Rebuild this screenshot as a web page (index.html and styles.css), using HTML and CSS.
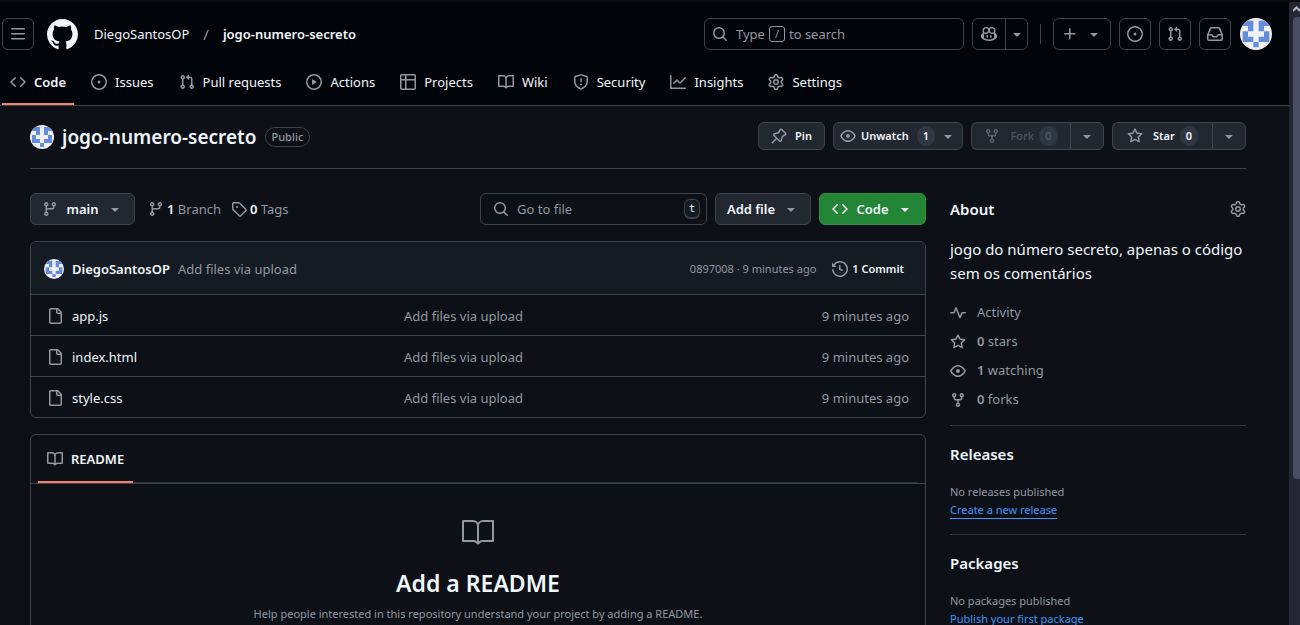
FILE: index.html
```html
<!DOCTYPE html>
<html lang="en">
<head>
<meta charset="utf-8">
<title>DiegoSantosOP/jogo-numero-secreto</title>
<link rel="stylesheet" href="styles.css">
</head>
<body>
<svg class="sprite" aria-hidden="true">
<symbol id="menu" viewBox="0 0 16 16"><path d="M1 2.75A.75.75 0 0 1 1.75 2h12.5a.75.75 0 0 1 0 1.5H1.75A.75.75 0 0 1 1 2.75Zm0 5A.75.75 0 0 1 1.75 7h12.5a.75.75 0 0 1 0 1.5H1.75A.75.75 0 0 1 1 7.75ZM1.75 12h12.5a.75.75 0 0 1 0 1.5H1.75a.75.75 0 0 1 0-1.5Z"/></symbol>
<symbol id="github" viewBox="0 0 16 16"><path d="M8 0c4.42 0 8 3.58 8 8a8.013 8.013 0 0 1-5.45 7.59c-.4.08-.55-.17-.55-.38 0-.27.01-1.13.01-2.2 0-.75-.25-1.23-.54-1.48 1.78-.2 3.65-.88 3.65-3.95 0-.88-.31-1.59-.82-2.15.08-.2.36-1.02-.08-2.12 0 0-.67-.22-2.2.82-.64-.18-1.32-.27-2-.27-.68 0-1.36.09-2 .27-1.53-1.03-2.2-.82-2.2-.82-.44 1.1-.16 1.92-.08 2.12-.51.56-.82 1.28-.82 2.15 0 3.06 1.86 3.75 3.64 3.95-.23.2-.44.55-.51 1.07-.46.21-1.61.55-2.33-.66-.15-.24-.6-.83-1.23-.82-.67.01-.27.38.01.53.34.19.73.9.82 1.13.16.45.68 1.31 2.69.94 0 .67.01 1.3.01 1.49 0 .21-.15.45-.55.38A7.995 7.995 0 0 1 0 8c0-4.42 3.58-8 8-8Z"/></symbol>
<symbol id="code" viewBox="0 0 16 16"><path d="m11.28 3.22 4.25 4.25a.75.75 0 0 1 0 1.06l-4.25 4.25a.749.749 0 0 1-1.275-.326.749.749 0 0 1 .215-.734L13.94 8l-3.72-3.72a.749.749 0 0 1 .326-1.275.749.749 0 0 1 .734.215Zm-6.56 0a.751.751 0 0 1 1.042.018.751.751 0 0 1 .018 1.042L2.06 8l3.72 3.72a.749.749 0 0 1-.326 1.275.749.749 0 0 1-.734-.215L.47 8.53a.75.75 0 0 1 0-1.06Z"/></symbol>
<symbol id="issue" viewBox="0 0 16 16"><path d="M8 9.5a1.5 1.5 0 1 0 0-3 1.5 1.5 0 0 0 0 3Z"/><path d="M8 0a8 8 0 1 1 0 16A8 8 0 0 1 8 0ZM1.5 8a6.5 6.5 0 1 0 13 0 6.5 6.5 0 0 0-13 0Z"/></symbol>
<symbol id="pull" viewBox="0 0 16 16"><path d="M1.5 3.25a2.25 2.25 0 1 1 3 2.122v5.256a2.251 2.251 0 1 1-1.5 0V5.372A2.25 2.25 0 0 1 1.5 3.25Zm5.677-.177L9.573.677A.25.25 0 0 1 10 .854V2.5h1A2.5 2.5 0 0 1 13.5 5v5.628a2.251 2.251 0 1 1-1.5 0V5a1 1 0 0 0-1-1h-1v1.646a.25.25 0 0 1-.427.177L7.177 3.427a.25.25 0 0 1 0-.354ZM3.75 2.5a.75.75 0 1 0 0 1.5.75.75 0 0 0 0-1.5Zm0 9.5a.75.75 0 1 0 0 1.5.75.75 0 0 0 0-1.5Zm8.25.75a.75.75 0 1 0 1.5 0 .75.75 0 0 0-1.5 0Z"/></symbol>
<symbol id="play" viewBox="0 0 16 16"><path d="M8 0a8 8 0 1 1 0 16A8 8 0 0 1 8 0ZM1.5 8a6.5 6.5 0 1 0 13 0 6.5 6.5 0 0 0-13 0Zm4.879-2.773 4.264 2.559a.25.25 0 0 1 0 .428l-4.264 2.559A.25.25 0 0 1 6 10.559V5.442a.25.25 0 0 1 .379-.215Z"/></symbol>
<symbol id="table" viewBox="0 0 16 16"><path d="M0 1.75C0 .784.784 0 1.75 0h12.5C15.216 0 16 .784 16 1.75v12.5A1.75 1.75 0 0 1 14.25 16H1.75A1.75 1.75 0 0 1 0 14.25ZM6.5 6.5v8h7.75a.25.25 0 0 0 .25-.25V6.5Zm8-1.5V1.75a.25.25 0 0 0-.25-.25H6.5V5Zm-13 1.5v7.75c0 .138.112.25.25.25H5v-8ZM5 5V1.5H1.75a.25.25 0 0 0-.25.25V5Z"/></symbol>
<symbol id="book" viewBox="0 0 16 16"><path d="M0 1.75A.75.75 0 0 1 .75 1h4.253c1.227 0 2.317.59 3 1.501A3.743 3.743 0 0 1 11.006 1h4.245a.75.75 0 0 1 .75.75v10.5a.75.75 0 0 1-.75.75h-4.507a2.25 2.25 0 0 0-1.591.659l-.622.621a.75.75 0 0 1-1.06 0l-.622-.621A2.25 2.25 0 0 0 5.258 13H.75a.75.75 0 0 1-.75-.75Zm7.251 10.324.004-5.073-.002-2.253A2.25 2.25 0 0 0 5.003 2.5H1.5v9h3.757a3.75 3.75 0 0 1 1.994.574ZM8.755 4.75l-.004 7.322a3.752 3.752 0 0 1 1.992-.572H14.5v-9h-3.495a2.25 2.25 0 0 0-2.25 2.25Z"/></symbol>
<symbol id="book-large" viewBox="0 0 24 24"><path d="M0 3.75A.75.75 0 0 1 .75 3h7.497c1.566 0 2.945.8 3.751 2.014A4.495 4.495 0 0 1 15.75 3h7.5a.75.75 0 0 1 .75.75v15.063a.752.752 0 0 1-.755.75l-7.682-.052a3 3 0 0 0-2.142.878l-.89.891a.75.75 0 0 1-1.061 0l-.902-.901a2.996 2.996 0 0 0-2.121-.879H.75a.75.75 0 0 1-.75-.75Zm12.75 15.232a4.503 4.503 0 0 1 2.823-.971l6.927.047V4.5h-6.75a3 3 0 0 0-3 3ZM11.247 7.497a3 3 0 0 0-3-2.997H1.5V18h6.947c1.018 0 2.006.346 2.803.98Z"/></symbol>
<symbol id="shield" viewBox="0 0 16 16"><path d="M7.467.133a1.748 1.748 0 0 1 1.066 0l5.25 1.68A1.75 1.75 0 0 1 15 3.48V7c0 1.566-.32 3.182-1.303 4.682-.983 1.498-2.585 2.813-5.032 3.855a1.697 1.697 0 0 1-1.33 0c-2.447-1.042-4.049-2.357-5.032-3.855C1.32 10.182 1 8.566 1 7V3.48a1.75 1.75 0 0 1 1.217-1.667Zm.61 1.429a.25.25 0 0 0-.153 0l-5.25 1.68a.25.25 0 0 0-.174.238V7c0 1.358.275 2.666 1.057 3.86.784 1.194 2.121 2.34 4.366 3.297a.196.196 0 0 0 .154 0c2.245-.956 3.582-2.104 4.366-3.298C13.225 9.666 13.5 8.36 13.5 7V3.48a.251.251 0 0 0-.174-.237l-5.25-1.68ZM8.75 4.75v3a.75.75 0 0 1-1.5 0v-3a.75.75 0 0 1 1.5 0ZM9 10.5a1 1 0 1 1-2 0 1 1 0 0 1 2 0Z"/></symbol>
<symbol id="graph" viewBox="0 0 16 16"><path d="M1.5 1.75V13.5h13.75a.75.75 0 0 1 0 1.5H.75a.75.75 0 0 1-.75-.75V1.75a.75.75 0 0 1 1.5 0Zm14.28 2.53-5.25 5.25a.75.75 0 0 1-1.06 0L7 7.06 4.28 9.78a.751.751 0 0 1-1.042-.018.751.751 0 0 1-.018-1.042l3.25-3.25a.75.75 0 0 1 1.06 0L10 7.94l4.72-4.72a.751.751 0 0 1 1.042.018.751.751 0 0 1 .018 1.042Z"/></symbol>
<symbol id="gear" viewBox="0 0 16 16"><path d="M8 0a8.2 8.2 0 0 1 .701.031C9.444.095 9.99.645 10.16 1.29l.288 1.107c.018.066.079.158.212.224.231.114.454.243.668.386.123.082.233.09.299.071l1.103-.303c.644-.176 1.392.021 1.82.63.27.385.506.792.704 1.218.315.675.111 1.422-.364 1.891l-.814.806c-.049.048-.098.147-.088.294.016.257.016.515 0 .772-.01.147.038.246.088.294l.814.806c.475.469.679 1.216.364 1.891a7.977 7.977 0 0 1-.704 1.217c-.428.61-1.176.807-1.82.63l-1.102-.302c-.067-.019-.177-.011-.3.071a5.909 5.909 0 0 1-.668.386c-.133.066-.194.158-.211.224l-.29 1.106c-.168.646-.715 1.196-1.458 1.26a8.006 8.006 0 0 1-1.402 0c-.743-.064-1.289-.614-1.458-1.26l-.289-1.106c-.018-.066-.079-.158-.212-.224a5.738 5.738 0 0 1-.668-.386c-.123-.082-.233-.09-.299-.071l-1.103.303c-.644.176-1.392-.021-1.82-.63a8.12 8.12 0 0 1-.704-1.218c-.315-.675-.111-1.422.363-1.891l.815-.806c.05-.048.098-.147.088-.294a6.214 6.214 0 0 1 0-.772c.01-.147-.038-.246-.088-.294l-.815-.806C.635 6.045.431 5.298.746 4.623a7.92 7.92 0 0 1 .704-1.217c.428-.61 1.176-.807 1.82-.63l1.102.302c.067.019.177.011.3-.071.214-.143.437-.272.668-.386.133-.066.194-.158.211-.224l.29-1.106C6.009.645 6.556.095 7.299.03 7.53.01 7.764 0 8 0Zm-.571 1.525c-.036.003-.108.036-.137.146l-.289 1.105c-.147.561-.549.967-.998 1.189-.173.086-.34.183-.5.29-.417.278-.97.423-1.529.27l-1.103-.303c-.109-.03-.175.016-.195.045-.22.312-.412.644-.573.99-.014.031-.021.11.059.19l.815.806c.411.406.562.957.53 1.456a4.709 4.709 0 0 0 0 .582c.032.499-.119 1.05-.53 1.456l-.815.806c-.081.08-.073.159-.059.19.162.346.353.677.573.989.02.03.085.076.195.046l1.102-.303c.56-.153 1.113-.008 1.53.27.161.107.328.204.501.29.447.222.85.629.997 1.189l.289 1.105c.029.109.101.143.137.146a6.6 6.6 0 0 0 1.142 0c.036-.003.108-.036.137-.146l.289-1.105c.147-.561.549-.967.998-1.189.173-.086.34-.183.5-.29.417-.278.97-.423 1.529-.27l1.103.303c.109.029.175-.016.195-.045.22-.313.411-.644.573-.99.014-.031.021-.11-.059-.19l-.815-.806c-.411-.406-.562-.957-.53-1.456a4.709 4.709 0 0 0 0-.582c-.032-.499.119-1.05.53-1.456l.815-.806c.081-.08.073-.159.059-.19a6.464 6.464 0 0 0-.573-.989c-.02-.03-.085-.076-.195-.046l-1.102.303c-.56.153-1.113.008-1.53-.27a4.44 4.44 0 0 0-.501-.29c-.447-.222-.85-.629-.997-1.189l-.289-1.105c-.029-.11-.101-.143-.137-.146a6.6 6.6 0 0 0-1.142 0ZM11 8a3 3 0 1 1-6 0 3 3 0 0 1 6 0ZM9.5 8a1.5 1.5 0 1 0-3.001.001A1.5 1.5 0 0 0 9.5 8Z"/></symbol>
<symbol id="search" viewBox="0 0 16 16"><path d="M10.68 11.74a6 6 0 0 1-7.922-8.982 6 6 0 0 1 8.982 7.922l3.04 3.04a.749.749 0 0 1-.326 1.275.749.749 0 0 1-.734-.215ZM11.5 7a4.499 4.499 0 1 0-8.997 0A4.499 4.499 0 0 0 11.5 7Z"/></symbol>
<symbol id="copilot" viewBox="0 0 16 16"><path d="M7.998 15.035c-4.562 0-7.873-2.914-7.998-3.749V9.338c.085-.628.677-1.686 1.588-2.065.013-.07.024-.143.036-.218.029-.183.06-.384.126-.612-.201-.508-.254-1.084-.254-1.656 0-.87.128-1.769.693-2.484.579-.733 1.494-1.124 2.724-1.261 1.206-.134 2.262.034 2.944.765.05.053.096.108.139.165.044-.057.094-.112.143-.165.682-.731 1.738-.899 2.944-.765 1.23.137 2.145.528 2.724 1.261.566.715.693 1.614.693 2.484 0 .572-.053 1.148-.254 1.656.066.228.098.429.126.612.012.076.024.148.037.218.924.385 1.522 1.471 1.591 2.095v1.872c0 .766-3.351 3.795-8.002 3.795Zm0-1.485c2.28 0 4.584-1.11 5.002-1.433V7.862l-.023-.116c-.49.21-1.075.291-1.727.291-1.146 0-2.059-.327-2.71-.991A3.222 3.222 0 0 1 8 6.303a3.24 3.24 0 0 1-.544.743c-.65.664-1.563.991-2.71.991-.652 0-1.236-.081-1.727-.291l-.023.116v4.255c.419.323 2.722 1.433 5.002 1.433ZM6.762 2.83c-.193-.206-.637-.413-1.682-.297-1.019.113-1.479.404-1.713.7-.247.312-.369.789-.369 1.554 0 .793.129 1.171.308 1.371.162.181.519.379 1.442.379.853 0 1.339-.235 1.638-.54.315-.322.527-.827.617-1.553.117-.935-.037-1.395-.241-1.614Zm4.155-.297c-1.044-.116-1.488.091-1.681.297-.204.219-.359.679-.242 1.614.091.726.303 1.231.618 1.553.299.305.784.54 1.638.54.922 0 1.28-.198 1.442-.379.179-.2.308-.578.308-1.371 0-.765-.123-1.242-.37-1.554-.233-.296-.693-.587-1.713-.7Z"/><path d="M6.25 9.037a.75.75 0 0 1 .75.75v1.501a.75.75 0 0 1-1.5 0V9.787a.75.75 0 0 1 .75-.75Zm4.25.75v1.501a.75.75 0 0 1-1.5 0V9.787a.75.75 0 0 1 1.5 0Z"/></symbol>
<symbol id="down" viewBox="0 0 16 16"><path d="m4.427 7.427 3.396 3.396a.25.25 0 0 0 .354 0l3.396-3.396A.25.25 0 0 0 11.396 7H4.604a.25.25 0 0 0-.177.427Z"/></symbol>
<symbol id="plus" viewBox="0 0 16 16"><path d="M7.75 2a.75.75 0 0 1 .75.75V7h4.25a.75.75 0 0 1 0 1.5H8.5v4.25a.75.75 0 0 1-1.5 0V8.5H2.75a.75.75 0 0 1 0-1.5H7V2.75A.75.75 0 0 1 7.75 2Z"/></symbol>
<symbol id="inbox" viewBox="0 0 16 16"><path d="M2.8 2.06A1.75 1.75 0 0 1 4.41 1h7.18c.7 0 1.333.417 1.61 1.06l2.74 6.395c.04.093.06.194.06.295v4.5A1.75 1.75 0 0 1 14.25 15H1.75A1.75 1.75 0 0 1 0 13.25v-4.5c0-.101.02-.202.06-.295Zm1.61.44a.25.25 0 0 0-.23.152L1.887 8H4.75a.75.75 0 0 1 .6.3L6.625 10h2.75l1.275-1.7a.75.75 0 0 1 .6-.3h2.863L11.82 2.652a.25.25 0 0 0-.23-.152Zm10.09 7h-2.875l-1.275 1.7a.75.75 0 0 1-.6.3h-3.5a.75.75 0 0 1-.6-.3L4.375 9.5H1.5v3.75c0 .138.112.25.25.25h12.5a.25.25 0 0 0 .25-.25Z"/></symbol>
<symbol id="pin" viewBox="0 0 16 16"><path d="m11.294.984 3.722 3.722a1.75 1.75 0 0 1-.504 2.826l-1.327.613a3.089 3.089 0 0 0-1.707 2.084l-.584 2.454c-.317 1.332-1.972 1.8-2.94.832L5.75 11.311 1.78 15.28a.749.749 0 1 1-1.06-1.06l3.969-3.97-2.204-2.204c-.968-.968-.5-2.623.832-2.94l2.454-.584a3.08 3.08 0 0 0 2.084-1.707l.613-1.327a1.75 1.75 0 0 1 2.826-.504ZM6.283 9.723l2.732 2.731a.25.25 0 0 0 .42-.119l.584-2.454a4.586 4.586 0 0 1 2.537-3.098l1.328-.613a.25.25 0 0 0 .072-.404l-3.722-3.722a.25.25 0 0 0-.404.072l-.613 1.328a4.584 4.584 0 0 1-3.098 2.537l-2.454.584a.25.25 0 0 0-.119.42l2.731 2.732Z"/></symbol>
<symbol id="eye" viewBox="0 0 16 16"><path d="M8 2c1.981 0 3.671.992 4.933 2.078 1.27 1.091 2.187 2.345 2.637 3.023a1.62 1.62 0 0 1 0 1.798c-.45.678-1.367 1.932-2.637 3.023C11.67 13.008 9.981 14 8 14c-1.981 0-3.671-.992-4.933-2.078C1.797 10.83.88 9.576.43 8.898a1.62 1.62 0 0 1 0-1.798c.45-.677 1.367-1.931 2.637-3.022C4.33 2.992 6.019 2 8 2ZM1.679 7.932a.12.12 0 0 0 0 .136c.411.622 1.241 1.75 2.366 2.717C5.176 11.758 6.527 12.5 8 12.5c1.473 0 2.825-.742 3.955-1.715 1.124-.967 1.954-2.096 2.366-2.717a.12.12 0 0 0 0-.136c-.412-.621-1.242-1.75-2.366-2.717C10.824 4.242 9.473 3.5 8 3.5c-1.473 0-2.825.742-3.955 1.715-1.124.967-1.954 2.096-2.366 2.717ZM8 10a2 2 0 1 1-.001-3.999A2 2 0 0 1 8 10Z"/></symbol>
<symbol id="fork" viewBox="0 0 16 16"><path d="M5 5.372v.878c0 .414.336.75.75.75h4.5a.75.75 0 0 0 .75-.75v-.878a2.25 2.25 0 1 1 1.5 0v.878a2.25 2.25 0 0 1-2.25 2.25h-1.5v2.128a2.251 2.251 0 1 1-1.5 0V8.5h-1.5A2.25 2.25 0 0 1 3.5 6.25v-.878a2.25 2.25 0 1 1 1.5 0ZM5 3.25a.75.75 0 1 0-1.5 0 .75.75 0 0 0 1.5 0Zm6.75.75a.75.75 0 1 0 0-1.5.75.75 0 0 0 0 1.5Zm-3 8.75a.75.75 0 1 0-1.5 0 .75.75 0 0 0 1.5 0Z"/></symbol>
<symbol id="star" viewBox="0 0 16 16"><path d="M8 .25a.75.75 0 0 1 .673.418l1.882 3.815 4.21.612a.75.75 0 0 1 .416 1.279l-3.046 2.97.719 4.192a.751.751 0 0 1-1.088.791L8 12.347l-3.766 1.98a.75.75 0 0 1-1.088-.79l.72-4.194L.818 6.374a.75.75 0 0 1 .416-1.28l4.21-.611L7.327.668A.75.75 0 0 1 8 .25Zm0 2.445L6.615 5.5a.75.75 0 0 1-.564.41l-3.097.45 2.24 2.184a.75.75 0 0 1 .216.664l-.528 3.084 2.769-1.456a.75.75 0 0 1 .698 0l2.77 1.456-.53-3.084a.75.75 0 0 1 .216-.664l2.24-2.183-3.096-.45a.75.75 0 0 1-.564-.41L8 2.694Z"/></symbol>
<symbol id="branch" viewBox="0 0 16 16"><path d="M9.5 3.25a2.25 2.25 0 1 1 3 2.122V6A2.5 2.5 0 0 1 10 8.5H6a1 1 0 0 0-1 1v1.128a2.251 2.251 0 1 1-1.5 0V5.372a2.25 2.25 0 1 1 1.5 0v1.836A2.493 2.493 0 0 1 6 7h4a1 1 0 0 0 1-1v-.628A2.25 2.25 0 0 1 9.5 3.25Zm-6 0a.75.75 0 1 0 1.5 0 .75.75 0 0 0-1.5 0Zm8.25-.75a.75.75 0 1 0 0 1.5.75.75 0 0 0 0-1.5ZM4.25 12a.75.75 0 1 0 0 1.5.75.75 0 0 0 0-1.5Z"/></symbol>
<symbol id="tag" viewBox="0 0 16 16"><path d="M1 7.775V2.75C1 1.784 1.784 1 2.75 1h5.025c.464 0 .91.184 1.238.513l6.25 6.25a1.75 1.75 0 0 1 0 2.474l-5.026 5.026a1.75 1.75 0 0 1-2.474 0l-6.25-6.25A1.752 1.752 0 0 1 1 7.775Zm1.5 0c0 .066.026.13.073.177l6.25 6.25a.25.25 0 0 0 .354 0l5.025-5.025a.25.25 0 0 0 0-.354l-6.25-6.25a.25.25 0 0 0-.177-.073H2.75a.25.25 0 0 0-.25.25ZM6 5a1 1 0 1 1 0 2 1 1 0 0 1 0-2Z"/></symbol>
<symbol id="history" viewBox="0 0 16 16"><path d="m.427 1.927 1.215 1.215a8.002 8.002 0 1 1-1.6 5.685.75.75 0 1 1 1.493-.154 6.5 6.5 0 1 0 1.18-4.458l1.358 1.358A.25.25 0 0 1 3.896 6H.25A.25.25 0 0 1 0 5.75V2.104a.25.25 0 0 1 .427-.177ZM7.75 4a.75.75 0 0 1 .75.75v2.992l2.028.812a.75.75 0 0 1-.557 1.392l-2.5-1A.751.751 0 0 1 7 8.25v-3.5A.75.75 0 0 1 7.75 4Z"/></symbol>
<symbol id="file" viewBox="0 0 16 16"><path d="M2 1.75C2 .784 2.784 0 3.75 0h6.586c.464 0 .909.184 1.237.513l2.914 2.914c.329.328.513.773.513 1.237v9.586A1.75 1.75 0 0 1 13.25 16h-9.5A1.75 1.75 0 0 1 2 14.25Zm1.75-.25a.25.25 0 0 0-.25.25v12.5c0 .138.112.25.25.25h9.5a.25.25 0 0 0 .25-.25V6h-2.75A1.75 1.75 0 0 1 9 4.25V1.5Zm6.75.062V4.25c0 .138.112.25.25.25h2.688l-.011-.013-2.914-2.914-.013-.011Z"/></symbol>
<symbol id="pulse" viewBox="0 0 16 16"><path d="M6 2c.306 0 .582.187.696.471L10 10.731l1.304-3.26A.751.751 0 0 1 12 7h3.25a.75.75 0 0 1 0 1.5h-2.742l-1.812 4.528a.751.751 0 0 1-1.392 0L6 4.77 4.696 8.03A.75.75 0 0 1 4 8.5H.75a.75.75 0 0 1 0-1.5h2.742l1.812-4.529A.751.751 0 0 1 6 2Z"/></symbol>
<symbol id="identicon" viewBox="0 0 12 12"><path fill="#f0f0f0" d="M0 0h12v12H0z"/><path fill="#638ddb" d="M1 1h4v4H3V3H1zM11 1H7v4h2V3h2zM1 5h2v2h2v2H1zM11 5H9v2H7v2h4zM5 9h2v2H5z"/></symbol>
</svg>

<div class="window">
  <div class="page">
    <header class="site-header">
      <div class="global-bar">
        <button class="square-btn" aria-label="Open menu"><svg class="icon"><use href="#menu"/></svg></button>
        <a class="logo" href="#" aria-label="Homepage"><svg class="icon icon-logo"><use href="#github"/></svg></a>
        <nav class="crumbs" aria-label="Breadcrumb">
          <a href="#">DiegoSantosOP</a><span class="slash">/</span><a class="strong" href="#">jogo-numero-secreto</a>
        </nav>
        <button class="site-search"><svg class="icon"><use href="#search"/></svg><span class="search-text">Type <kbd class="slash-key">/</kbd> to search</span></button>
        <div class="split copilot">
          <button aria-label="Copilot"><svg class="icon"><use href="#copilot"/></svg></button>
          <button class="caret-btn" aria-label="Copilot options"><svg class="icon"><use href="#down"/></svg></button>
        </div>
        <span class="bar-divider"></span>
        <button class="square-btn create-btn" aria-label="Create new"><svg class="icon"><use href="#plus"/></svg><svg class="icon"><use href="#down"/></svg></button>
        <button class="square-btn" aria-label="Issues"><svg class="icon"><use href="#issue"/></svg></button>
        <button class="square-btn" aria-label="Pull requests"><svg class="icon"><use href="#pull"/></svg></button>
        <button class="square-btn" aria-label="Notifications"><svg class="icon"><use href="#inbox"/></svg></button>
        <button class="account" aria-label="Account menu"><svg class="avatar avatar-lg"><use href="#identicon"/></svg></button>
      </div>
      <nav class="repo-nav" aria-label="Repository">
        <a class="current" href="#"><svg class="icon"><use href="#code"/></svg>Code</a>
        <a href="#"><svg class="icon"><use href="#issue"/></svg>Issues</a>
        <a href="#"><svg class="icon"><use href="#pull"/></svg>Pull requests</a>
        <a href="#"><svg class="icon"><use href="#play"/></svg>Actions</a>
        <a href="#"><svg class="icon"><use href="#table"/></svg>Projects</a>
        <a href="#"><svg class="icon"><use href="#book"/></svg>Wiki</a>
        <a href="#"><svg class="icon"><use href="#shield"/></svg>Security</a>
        <a href="#"><svg class="icon"><use href="#graph"/></svg>Insights</a>
        <a href="#"><svg class="icon"><use href="#gear"/></svg>Settings</a>
      </nav>
    </header>

    <div class="content">
      <div class="repo-head">
        <div class="repo-title">
          <svg class="avatar avatar-md"><use href="#identicon"/></svg>
          <h1>jogo-numero-secreto</h1>
          <span class="pill">Public</span>
        </div>
        <div class="repo-actions">
          <button class="btn-sm pin"><svg class="icon"><use href="#pin"/></svg>Pin</button>
          <button class="btn-sm watch"><svg class="icon"><use href="#eye"/></svg>Unwatch<span class="count">1</span><svg class="icon"><use href="#down"/></svg></button>
          <div class="split-sm">
            <button class="btn-sm fork" disabled><svg class="icon"><use href="#fork"/></svg><span class="label">Fork<span class="count">0</span></span></button>
            <button class="btn-sm caret-sm" aria-label="Fork options"><svg class="icon"><use href="#down"/></svg></button>
          </div>
          <div class="split-sm">
            <button class="btn-sm star"><svg class="icon"><use href="#star"/></svg><span class="label">Star<span class="count">0</span></span></button>
            <button class="btn-sm caret-sm" aria-label="Star lists"><svg class="icon"><use href="#down"/></svg></button>
          </div>
        </div>
      </div>

      <div class="columns">
        <main>
          <div class="toolbar">
            <button class="btn branch-btn"><svg class="icon"><use href="#branch"/></svg>main<svg class="icon"><use href="#down"/></svg></button>
            <a class="stat" href="#"><svg class="icon"><use href="#branch"/></svg><span><strong>1</strong> Branch</span></a>
            <a class="stat tags" href="#"><svg class="icon"><use href="#tag"/></svg><span><strong>0</strong> Tags</span></a>
            <label class="file-search"><svg class="icon"><use href="#search"/></svg><input type="text" placeholder="Go to file" aria-label="Go to file"><kbd>t</kbd></label>
            <button class="btn add-btn">Add file<svg class="icon"><use href="#down"/></svg></button>
            <button class="btn code-btn"><svg class="icon"><use href="#code"/></svg>Code<svg class="icon"><use href="#down"/></svg></button>
          </div>

          <section class="box files">
            <div class="commit-bar">
              <svg class="avatar avatar-sm"><use href="#identicon"/></svg>
              <a class="author" href="#">DiegoSantosOP</a>
              <a class="message" href="#">Add files via upload</a>
              <span class="sha">0897008 · 9 minutes ago</span>
              <a class="commits" href="#"><svg class="icon"><use href="#history"/></svg>1 Commit</a>
            </div>
            <table>
              <tbody>
                <tr><td class="name"><a href="#"><svg class="icon"><use href="#file"/></svg>app.js</a></td><td>Add files via upload</td><td class="age">9 minutes ago</td></tr>
                <tr><td class="name"><a href="#"><svg class="icon"><use href="#file"/></svg>index.html</a></td><td>Add files via upload</td><td class="age">9 minutes ago</td></tr>
                <tr><td class="name"><a href="#"><svg class="icon"><use href="#file"/></svg>style.css</a></td><td>Add files via upload</td><td class="age">9 minutes ago</td></tr>
              </tbody>
            </table>
          </section>

          <section class="box readme">
            <div class="readme-tabs"><nav aria-label="Repository files"><a href="#"><svg class="icon"><use href="#book"/></svg>README</a></nav></div>
            <div class="blank">
              <svg class="icon icon-xl"><use href="#book-large"/></svg>
              <h2>Add a README</h2>
              <p>Help people interested in this repository understand your project by adding a README.</p>
            </div>
          </section>
        </main>

        <aside class="sidebar">
          <section class="about">
            <div class="about-head"><h2>About</h2><button class="plain" aria-label="Edit repository details"><svg class="icon"><use href="#gear"/></svg></button></div>
            <p class="description">jogo do número secreto, apenas o código sem os comentários</p>
            <ul>
              <li><a href="#"><svg class="icon"><use href="#pulse"/></svg>Activity</a></li>
              <li><a href="#"><svg class="icon"><use href="#star"/></svg><span><strong>0</strong> stars</span></a></li>
              <li><a href="#"><svg class="icon"><use href="#eye"/></svg><span><strong>1</strong> watching</span></a></li>
              <li><a href="#"><svg class="icon"><use href="#fork"/></svg><span><strong>0</strong> forks</span></a></li>
            </ul>
          </section>
          <section class="side-block">
            <h2>Releases</h2>
            <p>No releases published</p>
            <a class="underlined" href="#">Create a new release</a>
          </section>
          <section class="side-block">
            <h2>Packages</h2>
            <p>No packages published</p>
            <a class="underlined" href="#">Publish your first package</a>
          </section>
        </aside>
      </div>
    </div>
  </div>
  <div class="scrollbar" aria-hidden="true">
    <svg class="scroll-arrow" viewBox="0 0 7 13"><path d="M0 9l3.500-3.500L7 9" fill="none" stroke="currentColor" stroke-width="2"/></svg>
    <div class="thumb"></div>
  </div>
</div>
</body>
</html>
```
FILE: styles.css
```css
:root {
  --canvas: #0d1117;
  --inset: #010409;
  --raised: #151b23;
  --control: #212830;
  --border: #3d444d;
  --fg: #f0f6fc;
  --muted: #9198a1;
  --link: #4493f8;
  --accent: #f78166;
  --green: #238636;
}

* { box-sizing: border-box; }

body {
  margin: 0;
  background: var(--canvas);
  color: var(--fg);
  font: 13px/20px "Noto Sans", "Open Sans", sans-serif;
}

h1, h2, p, ul { margin: 0; padding: 0; }
ul { list-style: none; }
a { color: inherit; text-decoration: none; }
button, input, kbd { font: inherit; color: inherit; }
button { margin: 0; padding: 0; border: 0; background: none; white-space: nowrap; }

.sprite { position: absolute; width: 0; height: 0; }
.icon { width: 16px; height: 16px; flex: none; fill: var(--muted); display: block; }
.avatar { border-radius: 50%; flex: none; display: block; }
.avatar-lg { width: 32px; height: 32px; }
.avatar-md { width: 24px; height: 24px; }
.avatar-sm { width: 20px; height: 20px; }

.window { display: flex; height: 100vh; overflow: hidden; border-top: 2px solid #0b0b0d; }
.page { flex: 1; min-width: 0; }

/* Header */
.site-header { background: var(--inset); border-bottom: 1px solid var(--border); }
.global-bar { display: flex; align-items: center; padding: 16px 17px 8px 2px; gap: 8px; }
.square-btn {
  width: 32px; height: 32px; flex: none;
  display: flex; align-items: center; justify-content: center;
  border: 1px solid var(--border); border-radius: 6px;
}
.logo { margin-left: 5px; }
.icon-logo { width: 31px; height: 31px; fill: var(--fg); }
.crumbs { flex: 1; display: flex; align-items: center; margin-left: 8px; white-space: nowrap; }
.slash { color: var(--muted); font-size: 15px; margin: 0 14px; }
.strong { font-weight: 600; }
.site-search {
  width: 260px; height: 32px; padding: 0 7px;
  display: flex; align-items: center; gap: 8px;
  border: 1px solid var(--border); border-radius: 6px; color: var(--muted);
}
.search-text { display: flex; align-items: center; gap: 4px; }
.slash-key {
  width: 16px; height: 16px; border: 1px solid var(--muted); border-radius: 3px;
  font-size: 11px; line-height: 14px; text-align: center;
}
.split { display: flex; height: 32px; border: 1px solid var(--border); border-radius: 6px; }
.split button { width: 32px; display: flex; align-items: center; justify-content: center; }
.split .caret-btn { width: 22px; border-left: 1px solid var(--border); }
.bar-divider { width: 1px; height: 20px; margin: 0 4px; background: var(--border); }
.create-btn { width: 58px; gap: 8px; }
.account { margin-left: 1px; }

.repo-nav { display: flex; gap: 9px; padding-left: 2px; white-space: nowrap; }
.repo-nav a {
  display: flex; align-items: center; gap: 8px; height: 47px; padding: 2px 8px 0;
  border-bottom: 2px solid transparent;
}
.repo-nav .current { font-weight: 600; border-bottom-color: var(--accent); }

/* Repository heading */
.content { padding: 16px 43px 0 30px; }
.repo-head { display: flex; align-items: center; padding-bottom: 18px; border-bottom: 1px solid var(--border); }
.repo-title { display: flex; align-items: center; gap: 8px; padding-top: 2px; }
.repo-title h1 { font-size: 19px; line-height: 26px; font-weight: 600; }
.pill {
  padding: 0 6px; border: 1px solid var(--border); border-radius: 10px;
  color: var(--muted); font-size: 11px; line-height: 18px; font-weight: 500;
}
.repo-actions { display: flex; gap: 8px; margin-left: auto; }
.btn-sm {
  height: 28px; display: flex; align-items: center; justify-content: center;
  background: var(--control); border: 1px solid var(--border); border-radius: 6px;
  font-size: 11px; font-weight: 600;
}
.pin { width: 67px; gap: 8px; }
.watch { width: 130px; gap: 5px; }
.fork, .star { gap: 10px; }
.fork { width: 99px; color: #656c76a0; }
.fork .icon { opacity: .5; }
.star { width: 100px; }
.label { display: flex; align-items: center; gap: 5px; }
.split-sm { display: flex; }
.split-sm .btn-sm:first-child { border-right: 0; border-radius: 6px 0 0 6px; }
.split-sm .caret-sm { width: 34px; border-radius: 0 6px 6px 0; }
.count { min-width: 18px; padding: 0 6px; border-radius: 10px; background: #2f3742; line-height: 20px; }
.watch .count { margin-left: 3px; }

/* Columns */
.columns { display: grid; grid-template-columns: minmax(0, 1fr) 296px; gap: 24px; padding-top: 24px; }
.toolbar { display: flex; align-items: center; gap: 8px; height: 32px; margin-bottom: 16px; }
.btn {
  height: 32px; display: flex; align-items: center; justify-content: center; gap: 8px;
  background: var(--control); border: 1px solid var(--border); border-radius: 6px; font-weight: 600;
}
.branch-btn { width: 105px; }
.stat { display: flex; align-items: center; gap: 3px; margin-left: 5px; color: var(--muted); white-space: nowrap; }
.tags { margin-left: 2px; }
.stat strong { color: var(--fg); font-weight: 600; }
.file-search {
  width: 227px; height: 32px; margin-left: auto; padding: 0 6px 0 12px;
  display: flex; align-items: center; gap: 8px;
  border: 1px solid var(--border); border-radius: 6px;
}
.file-search input { flex: 1; min-width: 0; padding: 0; border: 0; outline: 0; background: none; }
.file-search input::placeholder { color: var(--muted); opacity: 1; }
.file-search kbd {
  width: 16px; height: 20px; border: 1px solid var(--border); border-bottom-width: 2px; border-radius: 6px;
  background: var(--raised); font: 11px/18px "DejaVu Sans Mono", monospace; text-align: center;
}
.add-btn { width: 96px; }
.code-btn { width: 107px; background: var(--green); border-color: #2f8f43; }
.code-btn .icon { fill: #fff; }

/* File list */
.box { border: 1px solid var(--border); border-radius: 6px; overflow: hidden; }
.commit-bar { display: flex; align-items: center; height: 52px; padding: 2px 21px 0 13px; background: var(--raised); }
.author { margin: 0 8px; font-weight: 600; }
.message { flex: 1; color: var(--muted); }
.sha { color: var(--muted); font-size: 11px; }
.commits { display: flex; align-items: center; gap: 4px; margin-left: 16px; font-size: 11px; font-weight: 600; }
table { width: 100%; border-spacing: 0; color: var(--muted); }
td { height: 41px; padding: 2px 0 0; border-top: 1px solid var(--border); }
.name { width: 373px; padding-left: 16px; color: var(--fg); }
.name a { display: flex; align-items: center; gap: 9px; }
.age { padding-right: 16px; text-align: right; }

/* Readme */
.readme { margin-top: 16px; }
.readme-tabs { height: 49px; padding: 0 8px 0 7px; border-bottom: 1px solid var(--border); }
.readme-tabs nav { display: flex; height: 48px; box-shadow: inset 0 -1px #2f353d; }
.readme-tabs a {
  display: flex; align-items: center; gap: 8px; padding: 2px 9px 0;
  border-bottom: 2px solid var(--accent); font-weight: 600;
}
.blank { padding: 32px; text-align: center; }
.icon-xl { width: 32px; height: 32px; margin: 0 auto 17px; }
.blank h2 { font-size: 23px; line-height: 36px; font-weight: 600; }
.blank p { margin-top: 4px; color: var(--muted); font-size: 11px; line-height: 18px; }

/* Sidebar */
.about-head { display: flex; align-items: center; justify-content: space-between; height: 32px; margin-bottom: 12px; }
.sidebar h2 { font-size: 15px; line-height: 24px; font-weight: 600; }
.description { font-size: 15px; line-height: 24px; margin-bottom: 17px; }
.about li { padding: 0 0 8px; line-height: 21px; color: var(--muted); }
.about li a { display: flex; align-items: center; gap: 11px; }
.about li strong { font-weight: 600; }
.about ul { padding-bottom: 7px; }
.side-block { padding: 16px 0 15px; border-top: 1px solid #2f353d; font-size: 11px; line-height: 18px; color: var(--muted); }
.side-block h2 { color: var(--fg); margin-bottom: 17px; }
.underlined { color: var(--link); text-decoration: underline; text-underline-offset: 4px; }

/* Scrollbar */
.scrollbar { width: 11px; flex: none; padding-left: 4px; background: #242733; color: #b4b6c0; }
.scroll-arrow { display: block; width: 7px; height: 13px; }
.thumb { height: 462px; margin-top: 2px; background: #4a4d63; border-radius: 4px 0 0 4px; }
```
